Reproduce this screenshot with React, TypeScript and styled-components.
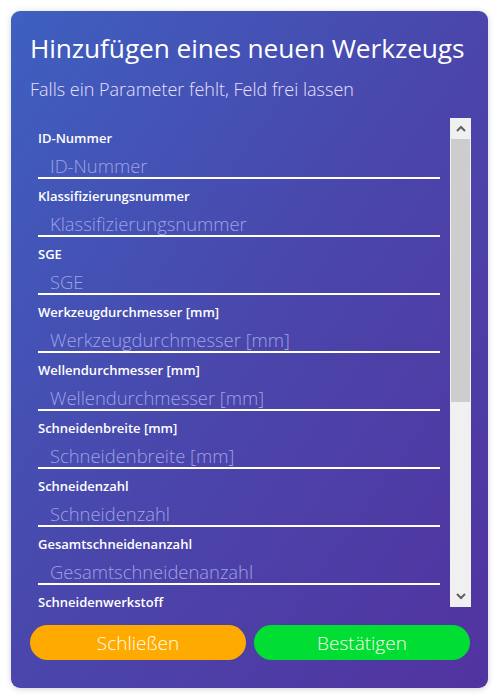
import React from "react";
import styled, { createGlobalStyle } from "styled-components";

const Global = createGlobalStyle`
  html, body { margin: 0; padding: 0; background: #ffffff; }
  body { font-family: "Open Sans", "Noto Sans", sans-serif; }
  * { box-sizing: border-box; }
`;

const Page = styled.div`
  width: 500px;
  height: 700px;
  padding: 11px 12px 12px 11px;
`;

const Card = styled.div`
  height: 677px;
  border-radius: 9px;
  background: linear-gradient(to bottom right, #3e60c0 0%, #4a46ab 50%, #5233a0 100%);
  box-shadow: 0 1px 6px rgba(0, 0, 0, 0.18);
  padding: 19px 17px 28px 19px;
  display: flex;
  flex-direction: column;
  color: #ffffff;
`;

const Title = styled.h1`
  margin: 0;
  font-size: 26.3px;
  font-weight: 400;
  line-height: 36px;
  letter-spacing: -0.1px;
  white-space: nowrap;
`;

const Subtitle = styled.p`
  margin: 11px 0 0;
  font-size: 18px;
  font-weight: 300;
  line-height: 24px;
  color: #e6e0ff;
  white-space: nowrap;
`;

const ScrollArea = styled.div`
  margin-top: 17px;
  height: 489px;
  display: flex;
`;

const FieldList = styled.div`
  flex: 1;
  overflow: hidden;
  padding: 11px 10px 0 8px;
`;

const Field = styled.div`
  display: flex;
  flex-direction: column;
  margin-bottom: 8px;
`;

const Label = styled.label`
  font-size: 13px;
  font-weight: 600;
  line-height: 18px;
  white-space: nowrap;
`;

const Input = styled.input`
  height: 32px;
  padding: 7px 0 1px 12px;
  border: none;
  border-bottom: 2px solid #ffffff;
  background: transparent;
  color: #ffffff;
  font-family: "Open Sans", "Noto Sans", sans-serif;
  font-size: 18.4px;
  font-weight: 300;
  outline: none;
  &::placeholder {
    color: #9ea2e2;
    opacity: 1;
  }
`;

const ScrollBar = styled.div`
  width: 21px;
  display: flex;
  flex-direction: column;
  background: #f0f0f0;
`;

const ArrowButton = styled.div`
  height: 21px;
  display: flex;
  align-items: center;
  justify-content: center;
`;

const Track = styled.div`
  flex: 1;
  display: flex;
  flex-direction: column;
  padding: 0 1px;
`;

const Thumb = styled.div`
  height: 263px;
  background: #cdcdcd;
`;

const ButtonRow = styled.div`
  margin-top: 18px;
  display: grid;
  grid-template-columns: 1fr 1fr;
  gap: 8px;
  padding-right: 1px;
`;

const Button = styled.button<{ $color: string }>`
  height: 35px;
  border: none;
  border-radius: 18px;
  background: ${(p) => p.$color};
  color: #fffff0;
  font-family: "Open Sans", "Noto Sans", sans-serif;
  font-size: 19px;
  font-weight: 300;
  cursor: pointer;
`;

const fields = [
  "ID-Nummer",
  "Klassifizierungsnummer",
  "SGE",
  "Werkzeugdurchmesser [mm]",
  "Wellendurchmesser [mm]",
  "Schneidenbreite [mm]",
  "Schneidenzahl",
  "Gesamtschneidenanzahl",
  "Schneidenwerkstoff",
  "Beschichtung",
  "Hersteller",
  "Lagerort",
  "Preis [€]",
  "Bemerkung",
];

const Chevron = ({ up }: { up: boolean }) => (
  <svg width="10" height="7" viewBox="0 0 10 7">
    <path
      d={up ? "M1 6 L5 2 L9 6" : "M1 1 L5 5 L9 1"}
      fill="none"
      stroke="#606060"
      strokeWidth="2"
    />
  </svg>
);

export default function App() {
  return (
    <>
      <Global />
      <Page>
        <Card>
          <Title>Hinzufügen eines neuen Werkzeugs</Title>
          <Subtitle>Falls ein Parameter fehlt, Feld frei lassen</Subtitle>
          <ScrollArea>
            <FieldList>
              {fields.map((f) => (
                <Field key={f}>
                  <Label>{f}</Label>
                  <Input placeholder={f} />
                </Field>
              ))}
            </FieldList>
            <ScrollBar>
              <ArrowButton>
                <Chevron up />
              </ArrowButton>
              <Track>
                <Thumb />
              </Track>
              <ArrowButton>
                <Chevron up={false} />
              </ArrowButton>
            </ScrollBar>
          </ScrollArea>
          <ButtonRow>
            <Button $color="#ffaa00">Schließen</Button>
            <Button $color="#00dd33">Bestätigen</Button>
          </ButtonRow>
        </Card>
      </Page>
    </>
  );
}
